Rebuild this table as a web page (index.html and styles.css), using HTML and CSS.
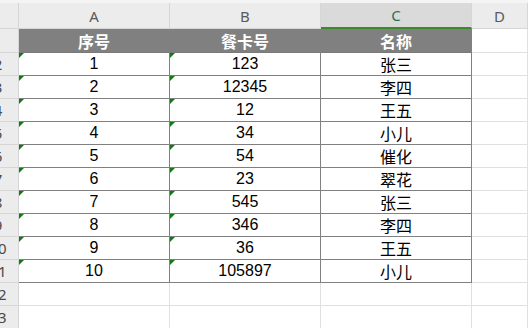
FILE: index.html
```html
<!DOCTYPE html>
<html>
<head>
<meta charset="utf-8">
<link rel="stylesheet" href="styles.css">
</head>
<body>
<div class="sheet">
  <div class="topstrip"></div>

  <div class="corner"></div>
  <div class="colh">A</div>
  <div class="colh">B</div>
  <div class="colh sel">C</div>
  <div class="colh">D</div>

  <div class="rh"><span>1</span></div>
  <div class="th">序号</div>
  <div class="th">餐卡号</div>
  <div class="th">名称</div>
  <div class="c"></div>

  <div class="rh"><span>2</span></div>
  <div class="td num flag">1</div><div class="td num flag">123</div><div class="td cjk last">张三</div><div class="c"></div>
  <div class="rh"><span>3</span></div>
  <div class="td num flag">2</div><div class="td num flag">12345</div><div class="td cjk last">李四</div><div class="c"></div>
  <div class="rh"><span>4</span></div>
  <div class="td num flag">3</div><div class="td num flag">12</div><div class="td cjk last">王五</div><div class="c"></div>
  <div class="rh"><span>5</span></div>
  <div class="td num flag">4</div><div class="td num flag">34</div><div class="td cjk last">小儿</div><div class="c"></div>
  <div class="rh"><span>6</span></div>
  <div class="td num flag">5</div><div class="td num flag">54</div><div class="td cjk last">催化</div><div class="c"></div>
  <div class="rh"><span>7</span></div>
  <div class="td num flag">6</div><div class="td num flag">23</div><div class="td cjk last">翠花</div><div class="c"></div>
  <div class="rh"><span>8</span></div>
  <div class="td num flag">7</div><div class="td num flag">545</div><div class="td cjk last">张三</div><div class="c"></div>
  <div class="rh"><span>9</span></div>
  <div class="td num flag">8</div><div class="td num flag">346</div><div class="td cjk last">李四</div><div class="c"></div>
  <div class="rh"><span>10</span></div>
  <div class="td num flag">9</div><div class="td num flag">36</div><div class="td cjk last">王五</div><div class="c"></div>
  <div class="rh"><span>11</span></div>
  <div class="td num flag">10</div><div class="td num flag">105897</div><div class="td cjk last">小儿</div><div class="c"></div>

  <div class="rh"><span>12</span></div>
  <div class="c"></div><div class="c"></div><div class="c"></div><div class="c"></div>
  <div class="rh"><span>13</span></div>
  <div class="c"></div><div class="c"></div><div class="c"></div><div class="c"></div>
</div>
</body>
</html>
```

FILE: styles.css
```css
* { box-sizing: border-box; }
html, body { margin: 0; padding: 0; background: #ffffff; overflow: hidden; }
body { width: 528px; height: 328px; }

.sheet {
  display: grid;
  grid-template-columns: 19px 151px 151px 151px 56px;
  grid-template-rows: 3px 26px 24px repeat(12, 23px);
  font-family: "Liberation Sans", "Noto Sans CJK SC", sans-serif;
  font-size: 16px;
  color: #000;
}

.topstrip {
  grid-column: 1 / -1;
  background: #f4f4f4;
}

.corner {
  background: #ececec;
  border-right: 1px solid #d6d6d6;
  border-bottom: 1px solid #d6d6d6;
  position: relative;
}

.colh {
  background: #ececec;
  border-right: 1px solid #d6d6d6;
  border-bottom: 1px solid #d6d6d6;
  display: flex;
  align-items: center;
  justify-content: center;
  font-family: "Noto Sans", "Liberation Sans", sans-serif;
  font-size: 15px;
  color: #5a5a5a;
}
.colh.sel {
  background: #dadada;
  color: #1f7350;
  border-bottom: 2px solid #3b8a2c;
}

.rh {
  background: #ececec;
  border-right: 1px solid #d6d6d6;
  border-bottom: 1px solid #d6d6d6;
  overflow: hidden;
  display: flex;
  align-items: center;
  font-family: "Noto Sans", "Liberation Sans", sans-serif;
  font-size: 15px;
  color: #4a4a4a;
}
.rh span {
  flex: none;
  width: 30px;
  margin-left: -17px;
  text-align: center;
}

.c {
  border-right: 1px solid #e0e0e0;
  border-bottom: 1px solid #e0e0e0;
}

.th {
  background: #808080;
  color: #ffffff;
  font-weight: bold;
  font-family: "Noto Sans CJK SC", sans-serif;
  font-size: 16px;
  display: flex;
  align-items: center;
  justify-content: center;
  border-right: 1px solid #808080;
  border-bottom: 1px solid #7a7a7a;
}

.td {
  position: relative;
  display: flex;
  align-items: center;
  justify-content: center;
  border-right: 1px solid #808080;
  border-bottom: 1px solid #808080;
  background: #fff;
}
.td.cjk {
  font-family: "Noto Sans CJK SC", sans-serif;
  font-size: 16px;
}
.td.flag::before {
  content: "";
  position: absolute;
  left: 0;
  top: 0;
  border-top: 5px solid #127a12;
  border-right: 5px solid transparent;
}
```
